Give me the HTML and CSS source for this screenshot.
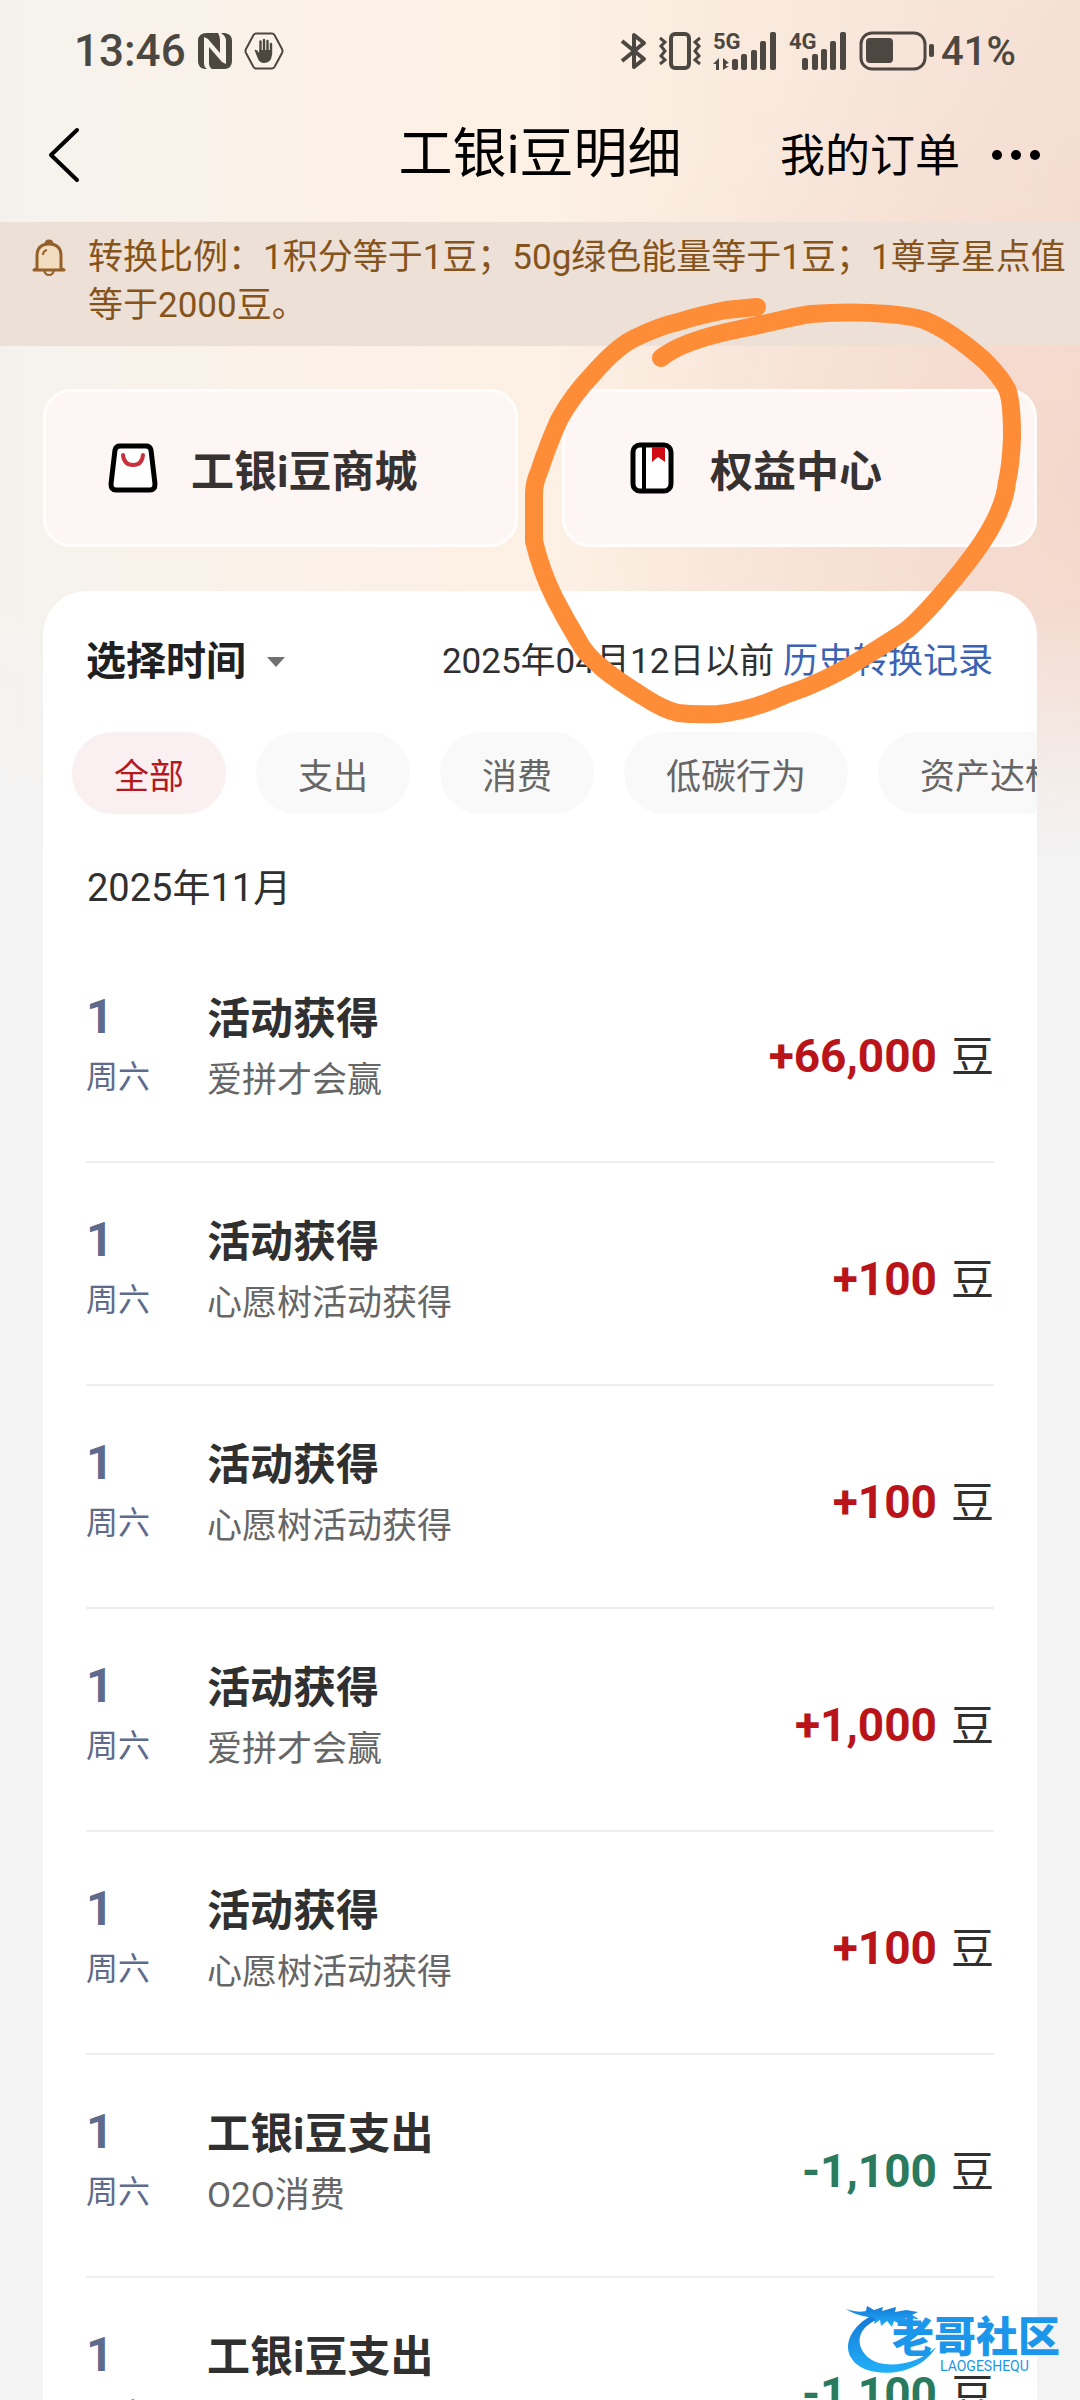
FILE: index.html
```html
<!DOCTYPE html>
<html lang="zh-CN">
<head>
<meta charset="utf-8">
<meta name="viewport" content="width=device-width, initial-scale=1">
<title>工银i豆明细</title>
<link rel="stylesheet" href="styles.css">
</head>
<body>
<div class="screen">
  <div class="status">
    <span class="time">13:46</span>
    <svg class="icon-nfc" width="34" height="36" viewBox="0 0 34 36" fill="#4c4741">
      <path d="M9 0H20Q22 3 22 7V20L10 6L6 4V31Q6 34 9 36H7Q0 35 0 28V8Q0 0 9 0Z"/>
      <path d="M23 0H27Q34 1 34 8V28Q34 35 27 36H14Q11 34 11 30V14L24 29L28 31V8Q28 3 23 0Z"/>
    </svg>
    <svg width="40" height="38" viewBox="0 0 40 38" fill="none" stroke="#4c4741">
      <path d="M12 1.500H28Q29.500 1.500 30.500 3L38 17Q39 19 38 21L30.500 35Q29.500 36.500 28 36.500H12Q10.500 36.500 9.500 35L2 21Q1 19 2 17L9.500 3Q10.500 1.500 12 1.500Z" stroke-width="2"/>
      <path d="M16.500 21V9.500M20 20V8M23.500 20V9M27 22V12" stroke-width="2.400" stroke-linecap="round"/>
      <path d="M10.500 18Q13 17 15 21V18H28V23Q27 31 20 31Q16 31 14 27Z" fill="#4c4741" stroke="none"/>
    </svg>
    <div class="status-right">
      <svg width="26" height="38" viewBox="0 0 26 38" fill="none" stroke="#4c4741" stroke-width="4" stroke-linejoin="round">
        <path d="M1 9L23 27L13 35V3L23 11L1 29"/>
      </svg>
      <svg width="42" height="38" viewBox="0 0 42 38" fill="none" stroke="#4c4741">
        <rect x="12" y="2" width="18" height="34" rx="4" stroke-width="4"/>
        <path d="M1 6L6 10L2 14L6 19L2 24L6 28L1 32M41 6L36 10L40 14L36 19L40 24L36 28L41 32" stroke-width="3"/>
      </svg>
      <svg width="64" height="40" viewBox="0 0 64 40" fill="#4c4741">
        <text class="net" x="0" y="18">5G</text>
        <path d="M0 33L6 27V39H3V33ZM10 27V39L16 35H13V33L16 32Z"/>
        <rect x="19" y="28" width="6" height="11" rx="2"/><rect x="28" y="23" width="6" height="16" rx="2"/><rect x="38" y="19" width="6" height="20" rx="2"/><rect x="47" y="10" width="6" height="29" rx="2"/><rect x="57" y="1" width="6" height="38" rx="2"/>
      </svg>
      <svg width="58" height="40" viewBox="0 0 58 40" fill="#4c4741">
        <text class="net" x="0" y="18">4G</text>
        <rect x="13" y="27" width="6" height="12" rx="2"/><rect x="23" y="23" width="6" height="16" rx="2"/><rect x="32" y="18" width="6" height="21" rx="2"/><rect x="41" y="10" width="6" height="29" rx="2"/><rect x="51" y="1" width="6" height="38" rx="2"/>
      </svg>
      <svg width="76" height="40" viewBox="0 0 76 40" fill="#4c4741">
        <rect x="2" y="2" width="64" height="36" rx="11" fill="none" stroke="#4c4741" stroke-width="3"/>
        <rect x="7" y="7" width="27" height="25" rx="4"/><rect x="70" y="13" width="5" height="13" rx="2"/>
      </svg>
      <span class="percent">41%</span>
    </div>
  </div>

  <header class="nav">
    <button class="back" type="button" aria-label="返回">
      <svg width="32" height="56" viewBox="0 0 32 56" fill="none" stroke="#000" stroke-width="4" stroke-linecap="round" stroke-linejoin="round"><path d="M29 3L3 28L29 53"/></svg>
    </button>
    <h1>工银i豆明细</h1>
    <div class="nav-right">
      <a class="orders" href="#orders">我的订单</a>
      <button class="more" type="button" aria-label="更多">
        <svg width="48" height="12" viewBox="0 0 48 12"><circle cx="5" cy="6" r="5"/><circle cx="24" cy="6" r="5"/><circle cx="43" cy="6" r="5"/></svg>
      </button>
    </div>
  </header>

  <div class="notice">
    <svg width="34" height="38" viewBox="0 0 34 38" fill="none" stroke="#94602a" stroke-width="3" stroke-linejoin="round">
      <path d="M14 5Q14 2 17 2Q20 2 20 5M5 29V17Q5 5 17 5Q29 5 29 17V29L32 31H2Z" fill="#f3ddc0"/>
      <path d="M12 31Q13 36 17 36Q21 36 22 31M11 16Q11 12 15 11" stroke-width="2"/>
    </svg>
    <p>转换比例：1积分等于1豆；50g绿色能量等于1豆；1尊享星点值等于2000豆。</p>
  </div>

  <nav class="entries">
    <a class="entry" href="#mall">
      <svg width="50" height="50" viewBox="0 0 50 50" fill="#fff" stroke="#000" stroke-width="5" stroke-linejoin="round">
        <path d="M12 3H38Q42 3 43 7L47 41Q47 47 42 47H8Q3 47 3 41L7 7Q8 3 12 3Z"/>
        <path d="M15 12Q16 22 25 22Q34 22 35 12" fill="none" stroke="#c8323c" stroke-width="4" stroke-linecap="round"/>
      </svg>
      <span>工银i豆商城</span>
    </a>
    <a class="entry" href="#benefits">
      <svg width="50" height="52" viewBox="0 0 50 52" fill="none" stroke="#000" stroke-width="5">
        <rect x="6" y="3" width="38" height="46" rx="7" fill="#fff"/>
        <path d="M17 3V49" stroke-width="4"/>
        <path d="M25 5H38V20L31 15L25 20Z" fill="#cf0a12" stroke="none"/>
      </svg>
      <span>权益中心</span>
    </a>
  </nav>

  <main class="panel">
    <div class="filter">
      <button class="period" type="button">选择时间 <svg width="20" height="12" viewBox="0 0 20 12" fill="#707070"><path d="M1 1H19L10 11Z"/></svg></button>
      <p class="history">2025年04月12日以前 <a href="#history">历史转换记录</a></p>
    </div>
    <div class="chips">
      <button class="chip chip-on" type="button">全部</button>
      <button class="chip" type="button">支出</button>
      <button class="chip" type="button">消费</button>
      <button class="chip" type="button">低碳行为</button>
      <button class="chip" type="button">资产达标</button>
    </div>
    <h2>2025年11月</h2>
    <ul class="records">
      <li><div class="date"><b>1</b><span>周六</span></div><div class="info"><h3>活动获得</h3><p>爱拼才会赢</p></div><div class="amount"><b>+66,000</b> 豆</div></li>
      <li><div class="date"><b>1</b><span>周六</span></div><div class="info"><h3>活动获得</h3><p>心愿树活动获得</p></div><div class="amount"><b>+100</b> 豆</div></li>
      <li><div class="date"><b>1</b><span>周六</span></div><div class="info"><h3>活动获得</h3><p>心愿树活动获得</p></div><div class="amount"><b>+100</b> 豆</div></li>
      <li><div class="date"><b>1</b><span>周六</span></div><div class="info"><h3>活动获得</h3><p>爱拼才会赢</p></div><div class="amount"><b>+1,000</b> 豆</div></li>
      <li><div class="date"><b>1</b><span>周六</span></div><div class="info"><h3>活动获得</h3><p>心愿树活动获得</p></div><div class="amount"><b>+100</b> 豆</div></li>
      <li><div class="date"><b>1</b><span>周六</span></div><div class="info"><h3>工银i豆支出</h3><p>O2O消费</p></div><div class="amount spent"><b>-1,100</b> 豆</div></li>
      <li><div class="date"><b>1</b><span>周六</span></div><div class="info"><h3>工银i豆支出</h3></div><div class="amount spent"><b>-1,100</b> 豆</div></li>
    </ul>
  </main>

  <svg class="circle-mark" width="500" height="430" viewBox="520 298 500 430" fill="none" stroke="#ff8c37" stroke-width="18" stroke-linecap="round" stroke-linejoin="round">
    <path d="M661 358C678 344 710 335 740 329C770 323 790 317 811 314Q851 311 888 314Q912 316 924 320C945 328 968 346 985 361Q1001 377 1007 389Q1012 400 1012 437Q1011 465 1007 482Q1004 510 981 544Q966 566 940 596Q914 626 901 634L863 658Q825 682 785 695Q750 711 718 714Q695 715 678 713Q664 710 644 697Q612 677 600 666Q585 654 578 640Q566 620 555 599Q541 571 534 541V492Q535 480 539 472Q547 447 559 420Q572 396 592 375Q618 345 637 337Q660 326 678 322Q700 315 726 310L757 307"/>
  </svg>

  <div class="watermark">
    <svg width="94" height="72" viewBox="0 0 94 72">
      <defs><linearGradient id="sea" x1="0" y1="0" x2="0" y2="1"><stop offset="0" stop-color="#1478d8"/><stop offset="1" stop-color="#22b0f8"/></linearGradient></defs>
      <g fill="url(#sea)">
        <path d="M27 12C6 22-4 42 6 56C18 76 72 76 90 44C70 64 30 68 18 50C8 36 16 22 33 16Z"/>
        <path d="M0 6Q11 10 20 8L21 3L28 7L37 4L36 8L50 4L49 9L60 7L72 9L66 12L73 16L59 15L69 22L55 18L60 24L48 18L46 24L41 18L35 23L34 17L28 21L29 15L22 14Q9 12 0 6Z"/>
      </g>
    </svg>
    <div class="watermark-name"><strong>老哥社区</strong><small>LAOGESHEQU</small></div>
  </div>
</div>
</body>
</html>
```
FILE: styles.css
```css
* { box-sizing: border-box; }

body, h1, h2, h3, p, ul { margin: 0; padding: 0; }

body {
  font-family: Roboto, "Noto Sans CJK SC", sans-serif;
  color: #303030;
}

a { color: inherit; text-decoration: none; }

button {
  border: 0;
  padding: 0;
  background: none;
  font-family: inherit;
  color: inherit;
}

svg { display: block; flex: none; overflow: visible; }

.screen {
  position: relative;
  height: 100vh;
  overflow: hidden;
  background:
    linear-gradient(to bottom, rgba(243, 243, 244, 0) 600px, #f3f3f4 860px),
    radial-gradient(500px 500px at 100% 480px, rgba(244, 212, 200, 0.700), rgba(244, 212, 200, 0)),
    linear-gradient(to right, #f5f2ee 0, #faf2ea 20%, #fdf0e4 50%, #f9e8dc 76%, #f5e0d5 100%);
}

/* system status bar */
.status {
  display: flex;
  align-items: center;
  gap: 12px;
  height: 102px;
  padding: 0 64px 0 74px;
  font-weight: 500;
  color: #4c4741;
}
.time { font-size: 44px; }
.percent { margin-left: -6px; font-size: 40px; }
.status-right {
  display: flex;
  align-items: center;
  gap: 12px;
  margin-left: auto;
}
.net { font-size: 22px; font-weight: 700; }

/* title bar */
.nav {
  display: grid;
  grid-template-columns: 1fr auto 1fr;
  align-items: center;
  height: 106px;
  margin-bottom: 14px;
  padding: 0 40px;
  color: #000;
}
.back { justify-self: start; padding-left: 8px; }
h1 { font-size: 54px; font-weight: 400; line-height: 72px; }
.nav-right {
  display: flex;
  align-items: center;
  justify-content: flex-end;
  gap: 32px;
}
.orders { padding-top: 4px; font-size: 45px; line-height: 60px; }

.notice {
  display: flex;
  gap: 22px;
  padding: 12px 12px 16px 32px;
  background: #ede0d7;
  color: #85541c;
}
.notice svg { margin-top: 5px; }
.notice p { font-size: 35px; line-height: 48px; }

/* shortcuts */
.entries {
  display: grid;
  grid-template-columns: 1fr 1fr;
  gap: 44px;
  padding: 43px 43px 44px;
}
.entry {
  display: flex;
  align-items: center;
  gap: 33px;
  height: 158px;
  padding-left: 62px;
  border: 3px solid #fffdfc;
  border-radius: 28px;
  background: #fef6f4;
  font-size: 43px;
  font-weight: 700;
  color: #373232;
}

/* record panel */
.panel {
  margin: 0 43px;
  border-radius: 44px 44px 0 0;
  background: #fff;
  overflow: hidden;
}
.filter {
  display: flex;
  align-items: center;
  justify-content: space-between;
  padding: 41px 44px 40px 43px;
}
.period {
  display: flex;
  align-items: center;
  gap: 20px;
  font-size: 40px;
  font-weight: 700;
  line-height: 60px;
  color: #202020;
}
.history { font-size: 35px; line-height: 60px; }
.history a { color: #3c62b4; }

.chips {
  display: flex;
  gap: 30px;
  padding-left: 29px;
}
.chip {
  flex: none;
  height: 82px;
  padding: 0 42px;
  border-radius: 41px;
  background: #f9f9f9;
  font-size: 35px;
  color: #666;
}
.chip-on { background: #faeff1; color: #b4191e; }

h2 {
  padding: 44px 44px 22px;
  font-size: 38px;
  font-weight: 400;
  line-height: 60px;
}

.records {
  padding: 0 43px;
  list-style: none;
}
.records li {
  display: flex;
  min-height: 223px;
  padding: 49px 0;
  border-bottom: 2px solid #eee;
  line-height: 60px;
}
.date {
  width: 121px;
  color: #5f6b8c;
}
.date b, .date span { display: block; }
.date b { font-size: 48px; line-height: 56px; }
.date span { font-size: 32px; line-height: 64px; }
.info { flex: 1; }
h3 { font-size: 43px; font-weight: 700; }
.info p { font-size: 35px; line-height: 63px; color: #666; }
.amount {
  display: flex;
  align-items: baseline;
  align-self: center;
  gap: 14px;
  padding-top: 12px;
  font-size: 43px;
}
.amount b { font-size: 46px; color: #b8141a; }
.spent b { color: #2a7a5e; }

/* hand-drawn ring over the page */
.circle-mark {
  position: absolute;
  top: 298px;
  right: 60px;
}

.watermark {
  position: absolute;
  right: 20px;
  bottom: 25px;
  display: flex;
  color: #1c96ea;
}
.watermark-name { margin-left: -48px; padding-top: 14px; }
.watermark strong, .watermark small { display: block; }
.watermark strong { font-size: 42px; font-weight: 900; line-height: 42px; }
.watermark small {
  padding-left: 48px;
  font-size: 14px;
  line-height: 14px;
}
```
